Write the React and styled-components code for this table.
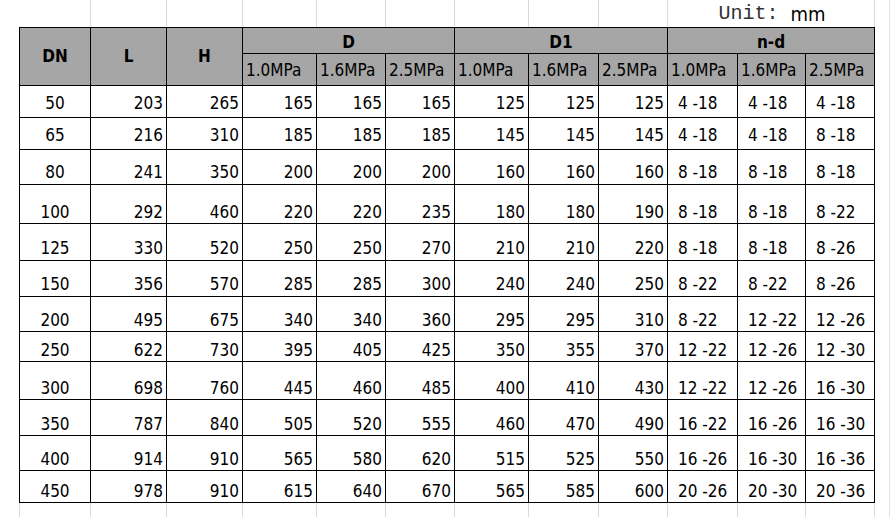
import styled, { createGlobalStyle } from "styled-components"

const GlobalStyle = createGlobalStyle`
  html, body {
    margin: 0;
    padding: 0;
    background: #ffffff;
  }
  body {
    font-family: "DejaVu Sans Condensed", "DejaVu Sans", sans-serif;
    font-stretch: condensed;
    color: #000;
  }
`

const COLS = "71px 76px 76px 74px 69px 69px 74px 70px 69px 70px 68px 69px"

const rows = [
  [50, 203, 265, 165, 165, 165, 125, 125, 125, "4 -18", "4 -18", "4 -18"],
  [65, 216, 310, 185, 185, 185, 145, 145, 145, "4 -18", "4 -18", "8 -18"],
  [80, 241, 350, 200, 200, 200, 160, 160, 160, "8 -18", "8 -18", "8 -18"],
  [100, 292, 460, 220, 220, 235, 180, 180, 190, "8 -18", "8 -18", "8 -22"],
  [125, 330, 520, 250, 250, 270, 210, 210, 220, "8 -18", "8 -18", "8 -26"],
  [150, 356, 570, 285, 285, 300, 240, 240, 250, "8 -22", "8 -22", "8 -26"],
  [200, 495, 675, 340, 340, 360, 295, 295, 310, "8 -22", "12 -22", "12 -26"],
  [250, 622, 730, 395, 405, 425, 350, 355, 370, "12 -22", "12 -26", "12 -30"],
  [300, 698, 760, 445, 460, 485, 400, 410, 430, "12 -22", "12 -26", "16 -30"],
  [350, 787, 840, 505, 520, 555, 460, 470, 490, "16 -22", "16 -26", "16 -30"],
  [400, 914, 910, 565, 580, 620, 515, 525, 550, "16 -26", "16 -30", "16 -36"],
  [450, 978, 910, 615, 640, 670, 565, 585, 600, "20 -26", "20 -30", "20 -36"],
]

// row heights (incl. bottom border) and baseline offsets, read off the sheet
const heights = [32, 32, 35, 39, 37, 36, 35, 30, 38, 36, 35, 32]
const pads = [5, 5, 3, 2, 3, 3, 2, 2, 2, 2, 2, 2]

const pressures = ["1.0MPa", "1.6MPa", "2.5MPa"]

function App() {
  return (
    <>
      <GlobalStyle />
      <Sheet>
        <Strip $h={27}>
          {Array.from({ length: 9 }).map((_, i) => (
            <GridCell key={i} />
          ))}
          <UnitCell>
            <Mono>Unit: </Mono>
            <Unit>mm</Unit>
          </UnitCell>
        </Strip>

        <Table>
          <HeadCell $rows={2}>DN</HeadCell>
          <HeadCell $rows={2}>L</HeadCell>
          <HeadCell $rows={2}>H</HeadCell>
          <HeadCell $cols={3} $top>D</HeadCell>
          <HeadCell $cols={3} $top>D1</HeadCell>
          <HeadCell $cols={3} $top>n-d</HeadCell>
          {[0, 1, 2].map((g) =>
            pressures.map((p) => <SubCell key={g + p}>{p}</SubCell>)
          )}

          {rows.map((r, ri) =>
            r.map((v, ci) => (
              <Cell
                key={ri + "-" + ci}
                $h={heights[ri]}
                $pad={pads[ri]}
                $align={ci === 0 ? "center" : ci > 8 ? "left" : "right"}
              >
                {v}
              </Cell>
            ))
          )}
        </Table>

        <Strip $h={15} $edge>
          {Array.from({ length: 12 }).map((_, i) => (
            <GridCell key={i} />
          ))}
        </Strip>
      </Sheet>
    </>
  )
}

export default App

const Sheet = styled.div`
  width: 890px;
  height: 517px;
  overflow: hidden;
  padding-left: 19px;
  box-sizing: border-box;
  border-right: 1px solid #e2e2e2;
`

const Strip = styled.div`
  display: grid;
  grid-template-columns: ${COLS};
  height: ${(p) => p.$h}px;
  border-left: 1px solid ${(p) => (p.$edge ? "#d9d9d9" : "transparent")};
  width: 856px;
  box-sizing: border-box;
`

const GridCell = styled.div`
  border-right: 1px solid #d9d9d9;
`

const UnitCell = styled.div`
  grid-column: span 3;
  border-right: 1px solid #d9d9d9;
  display: flex;
  justify-content: center;
  align-items: flex-end;
  padding-bottom: 3px;
  padding-left: 2px;
  line-height: 1;
  white-space: pre;
`

const Mono = styled.span`
  font-family: "Liberation Mono", "DejaVu Sans Mono", monospace;
  font-stretch: normal;
  font-size: 20px;
  color: #333;
`

const Unit = styled.span`
  font-size: 20px;
  color: #000;
`

const Table = styled.div`
  display: grid;
  grid-template-columns: ${COLS};
  grid-template-rows: 26px 32px;
  grid-auto-rows: auto;
  border-top: 1px solid #000;
  border-left: 1px solid #000;
  width: 856px;
  box-sizing: border-box;
`

const HeadCell = styled.div`
  grid-row: span ${(p) => p.$rows || 1};
  grid-column: span ${(p) => p.$cols || 1};
  background: #a6a6a6;
  border-right: 1px solid #000;
  border-bottom: 1px solid #000;
  display: flex;
  align-items: center;
  justify-content: center;
  font-weight: bold;
  font-size: 17px;
  line-height: 1;
  padding-top: ${(p) => (p.$top ? 4 : 0)}px;
  box-sizing: border-box;
`

const SubCell = styled.div`
  background: #a6a6a6;
  border-right: 1px solid #000;
  border-bottom: 1px solid #000;
  display: flex;
  align-items: center;
  padding-left: 3px;
  padding-top: 2px;
  font-size: 17px;
  line-height: 1;
  white-space: nowrap;
  overflow: hidden;
  box-sizing: border-box;
`

const Cell = styled.div`
  height: ${(p) => p.$h}px;
  border-right: 1px solid #000;
  border-bottom: 1px solid #000;
  box-sizing: border-box;
  display: flex;
  align-items: flex-end;
  justify-content: ${(p) =>
    p.$align === "center" ? "center" : p.$align === "left" ? "flex-start" : "flex-end"};
  padding: 0 ${(p) => (p.$align === "right" ? 3 : 0)}px ${(p) => p.$pad}px
    ${(p) => (p.$align === "left" ? 10 : 0)}px;
  font-size: 17px;
  line-height: 1;
  white-space: pre;
`
